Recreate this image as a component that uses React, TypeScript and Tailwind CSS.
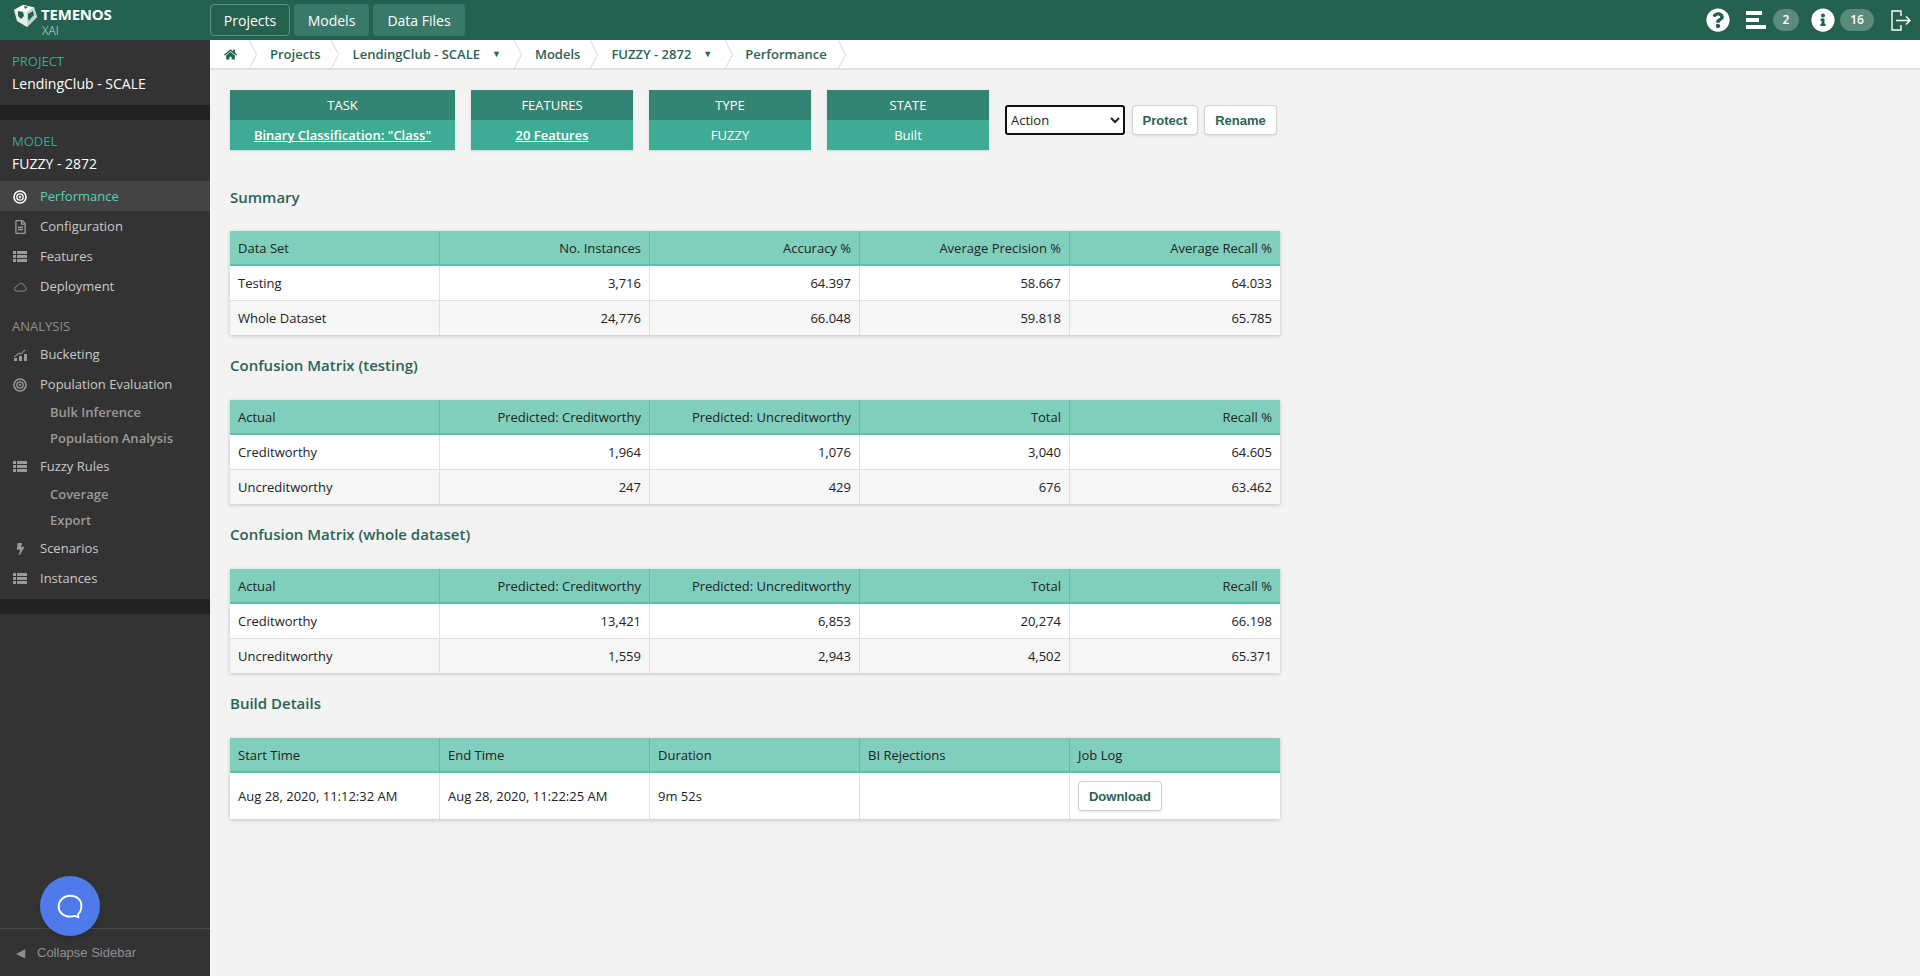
import React from "react";
import { FaHome, FaBolt, FaQuestionCircle, FaInfoCircle, FaRegFileAlt } from "react-icons/fa";

const Target = ({ className = "" }: { className?: string }) => (
  <svg viewBox="0 0 14 14" className={className} fill="none" stroke="currentColor">
    <circle cx="7" cy="7" r="6" strokeWidth="1.6" />
    <circle cx="7" cy="7" r="3.2" strokeWidth="1.3" />
    <circle cx="7" cy="7" r="1" fill="currentColor" strokeWidth="0.5" />
  </svg>
);

const ListIcon = () => (
  <svg viewBox="0 0 14 11" className="w-[14px] h-[11px]" fill="currentColor">
    <rect x="0" y="0" width="3" height="3" />
    <rect x="4" y="0" width="10" height="3" />
    <rect x="0" y="4" width="3" height="3" />
    <rect x="4" y="4" width="10" height="3" />
    <rect x="0" y="8" width="3" height="3" />
    <rect x="4" y="8" width="10" height="3" />
  </svg>
);

const CloudIcon = () => (
  <svg viewBox="0 0 15 10" className="w-[15px] h-[10px]" fill="none" stroke="currentColor" strokeWidth="0.9">
    <path d="M3.2 9.400h8.600a2.600 2.600 0 0 0 .5-5.100A3.600 3.600 0 0 0 5.600 3 2.200 2.200 0 0 0 3.600 4.800 2.400 2.400 0 0 0 3.200 9.400z" />
  </svg>
);

const BucketIcon = () => (
  <svg viewBox="0 0 13 12" className="w-[13px] h-[12px]" fill="currentColor">
    <rect x="0" y="9" width="3" height="3" />
    <rect x="5" y="7" width="3" height="5" />
    <rect x="10" y="5" width="3" height="7" />
    <path d="M0 7.500 5 3.500l1.500 1L11 .5l.6.7-5 4.600-1.500-1L.6 8.300z" />
  </svg>
);

const Logo = () => (
  <svg viewBox="0 0 24 24" className="w-[24px] h-[24px] shrink-0">
    <path d="M10 1 21 3.500 24 13 14 23 4 17 1 6z" fill="#e6eeeb" />
    <path d="M10 1 21 3.500 14 8 1 6z" fill="#ffffff" />
    <path d="M14 8 21 3.500 24 13 14 23z" fill="#c3d5cf" />
    <path d="M5 7l5 1 1 4-3 3-3-3zM15 10l5-3 1 4-3 3-2 3-1-3zM11 2l4 1-3 2z" fill="#25614f" />
  </svg>
);

const StackIcon = () => (
  <svg viewBox="0 0 20 18" className="w-[20px] h-[18px]" fill="#fff">
    <rect x="0" y="0" width="16" height="4" />
    <rect x="0" y="7" width="13" height="4" />
    <rect x="0" y="14" width="20" height="4" />
  </svg>
);

const ExitIcon = () => (
  <svg viewBox="0 0 20 21" className="w-[20px] h-[21px]" fill="none" stroke="#fff" strokeWidth="1.4">
    <path d="M10 6V1H1v19h9v-5" />
    <path d="M5 10.500h14M15 6.500l4 4-4 4" />
  </svg>
);

const Chevron = ({ ml }: { ml: string }) => (
  <svg viewBox="0 0 8 29" className={`${ml} w-[8px] h-[29px] shrink-0`} fill="none" stroke="#d9d9d9" strokeWidth="1">
    <path d="M0 0l7.500 14.500L0 29" />
  </svg>
);

const Crumb = ({ label, ml }: { label: string; ml: string }) => (
  <span className={`${ml} pt-[2px] text-[13px] font-semibold text-[#2a6454] whitespace-nowrap`}>{label}</span>
);

const Caret = () => <span className="ml-[12px] text-[9px] text-[#2a6454]">▼</span>;

const NavItem = ({ icon, label, active }: { icon: React.ReactNode; label: string; active?: boolean }) => (
  <div className={`h-[30px] pt-[1px] flex items-center pl-[13px] ${active ? "bg-[#444444] text-[#4fd8ba]" : "text-[#c8c8c8]"}`}>
    <span className={`w-[14px] flex justify-center shrink-0 ${active ? "text-white" : "text-[#999999]"}`}>{icon}</span>
    <span className="ml-[13px] text-[13px]">{label}</span>
  </div>
);

const SubItem = ({ label }: { label: string }) => (
  <div className="h-[26px] pt-[1px] flex items-center pl-[50px] text-[13px] font-semibold text-[#9a9a9a]">{label}</div>
);

const InfoCard = ({ title, value, link, w }: { title: string; value: string; link?: boolean; w: string }) => (
  <div className={`${w} text-center text-white text-[13px] shadow-sm`}>
    <div className="h-[30px] leading-[30px] bg-[#338573]">{title}</div>
    <div className={`h-[30px] leading-[30px] bg-[#3fab94] ${link ? "underline font-semibold" : ""}`}>{value}</div>
  </div>
);

const Table = ({ head, rows }: { head: string[]; rows: string[][] }) => (
  <table className="w-[1050px] table-fixed border-separate border-spacing-0 text-[13px] text-[#222222] shadow-[0_1px_4px_rgba(0,0,0,0.2)]">
    <thead>
      <tr className="bg-[#80cfbd]">
        {head.map((h, i) => (
          <th
            key={h}
            className={`h-[35px] pt-[2px] font-normal px-2 border-b-2 border-r border-[#5fc0aa] last:border-r-0 ${i === 0 ? "text-left" : "text-right"}`}
          >
            {h}
          </th>
        ))}
      </tr>
    </thead>
    <tbody>
      {rows.map((r, ri) => (
        <tr key={r[0]} className={ri % 2 ? "bg-[#f6f6f6]" : "bg-white"}>
          {r.map((c, i) => (
            <td
              key={i}
              className={`pt-[1px] px-2 border-r border-[#e0e0e0] last:border-r-0 ${ri === 0 ? "h-[35px] border-b" : "h-[34px]"} ${i === 0 ? "text-left" : "text-right"}`}
            >
              {c}
            </td>
          ))}
        </tr>
      ))}
    </tbody>
  </table>
);

const Heading = ({ children }: { children: React.ReactNode }) => (
  <h2 className="h-[20px] leading-[20px] text-[15px] font-semibold text-[#2a6454]">{children}</h2>
);

const btn =
  "h-[30px] pt-[1px] rounded-[4px] border border-[#d0d0d0] bg-white text-[13px] font-bold text-[#2a6454] font-['Liberation_Sans',sans-serif] shadow-[0_1px_2px_rgba(0,0,0,0.1)]";

export default function App() {
  return (
    <div className="h-[976px] w-[1920px] flex flex-col overflow-hidden bg-[#f3f3f3] font-['Open_Sans',sans-serif]">
      <header className="h-[40px] shrink-0 flex items-center bg-[#25614f]">
        <div className="w-[210px] shrink-0 flex pl-[13px] h-[40px] pt-[4px]">
          <Logo />
          <div className="ml-[4px] text-white leading-none">
            <div className="text-[15px] font-bold tracking-[-0.2px] mt-[3px]">TEMENOS</div>
            <div className="text-[12px] font-light ml-[1px] mt-[3px] text-[#cfdcd8]">XAI</div>
          </div>
        </div>
        <nav className="flex gap-1 text-[14px] text-white">
          <div className="h-[32px] w-[80px] flex items-center justify-center rounded-[4px] border border-[#5f9585] bg-[#25614f]">Projects</div>
          <div className="h-[32px] w-[75px] flex items-center justify-center rounded-[4px] bg-[#38796a]">Models</div>
          <div className="h-[32px] w-[92px] flex items-center justify-center rounded-[4px] bg-[#38796a]">Data Files</div>
        </nav>
        <div className="ml-auto flex items-center pr-[9px] text-white">
          <FaQuestionCircle className="w-[24px] h-[24px]" />
          <span className="ml-[16px]"><StackIcon /></span>
          <span className="ml-[7px] h-[22px] w-[26px] rounded-full bg-[#5c8a7d] text-[12px] font-semibold flex items-center justify-center">2</span>
          <FaInfoCircle className="ml-[12px] w-[24px] h-[24px]" />
          <span className="ml-[5px] h-[22px] w-[34px] rounded-full bg-[#5c8a7d] text-[12px] font-semibold flex items-center justify-center">16</span>
          <span className="ml-[17px]"><ExitIcon /></span>
        </div>
      </header>

      <div className="flex flex-1 min-h-0">
        <aside className="relative w-[210px] shrink-0 flex flex-col bg-[#333333]">
          <div className="h-[65px] pl-[12px] pt-[12px]">
            <div className="text-[13px] leading-[18px] text-[#3fa68f]">PROJECT</div>
            <div className="text-[14px] font-medium leading-[18px] mt-[5px] text-white">LendingClub - SCALE</div>
          </div>
          <div className="h-[15px] bg-[#222222]" />
          <div className="h-[61px] pl-[12px] pt-[12px]">
            <div className="text-[13px] leading-[18px] text-[#3fa68f]">MODEL</div>
            <div className="text-[14px] font-medium leading-[18px] mt-[5px] text-white">FUZZY - 2872</div>
          </div>
          <NavItem active icon={<Target className="w-[14px] h-[14px]" />} label="Performance" />
          <NavItem icon={<FaRegFileAlt className="w-[11px] h-[14px]" />} label="Configuration" />
          <NavItem icon={<ListIcon />} label="Features" />
          <NavItem icon={<CloudIcon />} label="Deployment" />
          <div className="h-[23px] mt-[15px] pl-[12px] text-[13px] leading-[20px] text-[#8f8f8f]">ANALYSIS</div>
          <NavItem icon={<BucketIcon />} label="Bucketing" />
          <NavItem icon={<Target className="w-[14px] h-[14px]" />} label="Population Evaluation" />
          <SubItem label="Bulk Inference" />
          <SubItem label="Population Analysis" />
          <NavItem icon={<ListIcon />} label="Fuzzy Rules" />
          <SubItem label="Coverage" />
          <SubItem label="Export" />
          <NavItem icon={<FaBolt className="w-[9px] h-[12px]" />} label="Scenarios" />
          <NavItem icon={<ListIcon />} label="Instances" />
          <div className="h-[15px] mt-[6px] bg-[#222222]" />
          <div className="mt-auto h-[48px] border-t border-[#4a4a4a] flex items-center pl-[16px] text-[13px] text-[#8f8f8f] font-['Liberation_Sans',sans-serif]">
            <span className="text-[12px] mr-[12px]">◀</span>
            Collapse Sidebar
          </div>
          <div className="absolute left-[40px] bottom-[40px] h-[60px] w-[60px] rounded-full bg-[#4f7bea] shadow-md flex items-center justify-center">
            <svg viewBox="0 0 24 24" className="w-[26px] h-[26px]" fill="none" stroke="#fff" strokeWidth="1.7">
              <path d="M12 2.500c6 0 10.500 3.500 10.500 9s-3 8-3 8l.2 2.800-3.400-1.100c-1.400.4-2.900.6-4.300.6-6 0-10.500-4-10.500-9.300S6 2.500 12 2.500z" />
            </svg>
          </div>
        </aside>

        <main className="flex-1 min-w-0 flex flex-col">
          <div className="h-[30px] shrink-0 bg-white border-b-2 border-[#e0e0e0] flex items-center pl-[14px]">
            <FaHome className="w-[13px] h-[13px] text-[#25614f]" />
            <Chevron ml="ml-[12px]" />
            <Crumb label="Projects" ml="ml-[13px]" />
            <Chevron ml="ml-[10px]" />
            <Crumb label="LendingClub - SCALE" ml="ml-[14px]" />
            <Caret />
            <Chevron ml="ml-[13px]" />
            <Crumb label="Models" ml="ml-[13px]" />
            <Chevron ml="ml-[10px]" />
            <Crumb label="FUZZY - 2872" ml="ml-[13px]" />
            <Caret />
            <Chevron ml="ml-[13px]" />
            <Crumb label="Performance" ml="ml-[12px]" />
            <Chevron ml="ml-[11px]" />
          </div>

          <div className="pl-[20px] pt-[20px] flex flex-col">
            <div className="flex items-center">
              <div className="flex gap-4">
                <InfoCard w="w-[225px]" title="TASK" value={'Binary Classification: "Class"'} link />
                <InfoCard w="w-[162px]" title="FEATURES" value="20 Features" link />
                <InfoCard w="w-[162px]" title="TYPE" value="FUZZY" />
                <InfoCard w="w-[162px]" title="STATE" value="Built" />
              </div>
              <select className="ml-[16px] h-[30px] w-[120px] rounded-[3px] border-2 border-[#111111] bg-white text-[13px] text-[#222222]">
                <option>Action</option>
              </select>
              <button className={`${btn} ml-[7px] w-[66px]`}>Protect</button>
              <button className={`${btn} ml-[6px] w-[73px]`}>Rename</button>
            </div>

            <div className="mt-[37px]"><Heading>Summary</Heading></div>
            <div className="mt-[24px]">
              <Table
                head={["Data Set", "No. Instances", "Accuracy %", "Average Precision %", "Average Recall %"]}
                rows={[
                  ["Testing", "3,716", "64.397", "58.667", "64.033"],
                  ["Whole Dataset", "24,776", "66.048", "59.818", "65.785"],
                ]}
              />
            </div>

            <div className="mt-[20px]"><Heading>Confusion Matrix (testing)</Heading></div>
            <div className="mt-[25px]">
              <Table
                head={["Actual", "Predicted: Creditworthy", "Predicted: Uncreditworthy", "Total", "Recall %"]}
                rows={[
                  ["Creditworthy", "1,964", "1,076", "3,040", "64.605"],
                  ["Uncreditworthy", "247", "429", "676", "63.462"],
                ]}
              />
            </div>

            <div className="mt-[20px]"><Heading>Confusion Matrix (whole dataset)</Heading></div>
            <div className="mt-[25px]">
              <Table
                head={["Actual", "Predicted: Creditworthy", "Predicted: Uncreditworthy", "Total", "Recall %"]}
                rows={[
                  ["Creditworthy", "13,421", "6,853", "20,274", "66.198"],
                  ["Uncreditworthy", "1,559", "2,943", "4,502", "65.371"],
                ]}
              />
            </div>

            <div className="mt-[20px]"><Heading>Build Details</Heading></div>
            <div className="mt-[25px]">
              <table className="w-[1050px] table-fixed border-separate border-spacing-0 text-[13px] text-[#222222] shadow-[0_1px_4px_rgba(0,0,0,0.2)]">
                <thead>
                  <tr className="bg-[#80cfbd]">
                    {["Start Time", "End Time", "Duration", "BI Rejections", "Job Log"].map((h) => (
                      <th key={h} className="h-[35px] pt-[2px] font-normal text-left px-2 border-b-2 border-r border-[#5fc0aa] last:border-r-0">{h}</th>
                    ))}
                  </tr>
                </thead>
                <tbody>
                  <tr className="bg-white">
                    <td className="h-[46px] pt-[1px] px-2 border-r border-[#e0e0e0]">Aug 28, 2020, 11:12:32 AM</td>
                    <td className="pt-[1px] px-2 border-r border-[#e0e0e0]">Aug 28, 2020, 11:22:25 AM</td>
                    <td className="pt-[1px] px-2 border-r border-[#e0e0e0]">9m 52s</td>
                    <td className="px-2 border-r border-[#e0e0e0]"></td>
                    <td className="px-2">
                      <button className={`${btn} w-[84px] block`}>Download</button>
                    </td>
                  </tr>
                </tbody>
              </table>
            </div>
          </div>
        </main>
      </div>
    </div>
  );
}
